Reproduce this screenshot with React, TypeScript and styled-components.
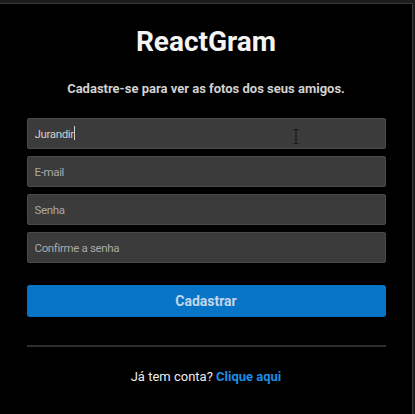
import React from 'react';
import styled, { createGlobalStyle } from 'styled-components';

const GlobalStyle = createGlobalStyle`
  html, body {
    margin: 0;
    padding: 0;
    background: #1c1c1c;
  }
  * {
    box-sizing: border-box;
  }
`;

const Frame = styled.div`
  width: 415px;
  height: 414px;
  padding: 3px 2px 0 0;
  background: #1c1c1c;
  overflow: hidden;
`;

const Screen = styled.div`
  height: 100%;
  background: #000;
  border-top: 1px solid #3a3a3a;
  border-right: 1px solid #3a3a3a;
  font-family: Roboto, "Liberation Sans", Arial, sans-serif;
  color: #fff;
`;

const Register = styled.div`
  width: 359px;
  margin: 0 auto;
  display: flex;
  flex-direction: column;
`;

const Title = styled.h1`
  margin: 21px 0 0;
  font-size: 28px;
  line-height: 34px;
  font-weight: 700;
  text-align: center;
  color: #f4f4f4;
`;

const Subtitle = styled.p`
  margin: 22px 0 0;
  font-size: 13px;
  line-height: 16px;
  font-weight: 700;
  text-align: center;
  color: #d2d2d2;
`;

const Form = styled.form`
  margin-top: 21px;
  display: flex;
  flex-direction: column;
  gap: 7px;
`;

const FieldWrap = styled.div`
  position: relative;
`;

const Input = styled.input`
  width: 100%;
  height: 31px;
  padding: 0 7px;
  background: #3b3b3b;
  border: 1px solid #4a4a4a;
  border-radius: 2px;
  color: #cfcfcf;
  font-family: Roboto, "Liberation Sans", Arial, sans-serif;
  font-size: 11.5px;
  letter-spacing: -0.35px;
  outline: none;

  &::placeholder {
    color: #a9a9a9;
  }
`;

const Caret = styled.span`
  position: absolute;
  top: 8px;
  left: 47px;
  width: 1px;
  height: 14px;
  background: #d0d0d0;
`;

const Cursor = styled.svg`
  position: absolute;
  top: 11px;
  left: 266px;
  pointer-events: none;
`;

const Submit = styled.button`
  margin-top: 15px;
  height: 32px;
  border: none;
  border-radius: 3px;
  background: #0874c7;
  color: #c3d6ea;
  font-family: Roboto, "Liberation Sans", Arial, sans-serif;
  font-size: 14px;
  font-weight: 700;
  cursor: pointer;
`;

const Divider = styled.hr`
  margin: 28px 0 0;
  border: none;
  border-top: 2px solid #2e2e2e;
`;

const Footer = styled.p`
  margin: 22px 0 0;
  font-size: 13px;
  line-height: 16px;
  text-align: center;
  color: #ececec;
`;

const Link = styled.a`
  color: #1b8ee6;
  font-weight: 700;
  text-decoration: none;
`;

export default function App() {
  return (
    <>
      <GlobalStyle />
      <Frame>
        <Screen>
          <Register>
            <Title>ReactGram</Title>
            <Subtitle>Cadastre-se para ver as fotos dos seus amigos.</Subtitle>
            <Form onSubmit={(e) => e.preventDefault()}>
              <FieldWrap>
                <Input type="text" placeholder="Nome" defaultValue="Jurandir" />
                <Caret />
                <Cursor width="6" height="15" viewBox="0 0 6 15">
                  <path d="M0.5 0.5h5M3 0.5v14M0.5 14.5h5" stroke="#1a1a1a" strokeWidth="1.2" fill="none" />
                </Cursor>
              </FieldWrap>
              <Input type="email" placeholder="E-mail" />
              <Input type="password" placeholder="Senha" />
              <Input type="password" placeholder="Confirme a senha" />
              <Submit type="submit">Cadastrar</Submit>
            </Form>
            <Divider />
            <Footer>
              Já tem conta? <Link href="#">Clique aqui</Link>
            </Footer>
          </Register>
        </Screen>
      </Frame>
    </>
  );
}
